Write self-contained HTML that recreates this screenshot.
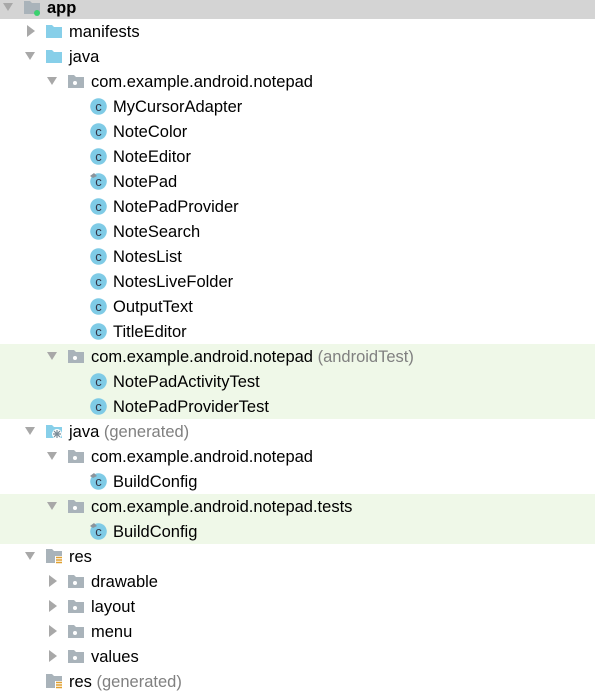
<!DOCTYPE html>
<html><head><meta charset="utf-8"><style>
body{margin:0;width:595px;height:697px;background:#fff;overflow:hidden;position:relative;font-family:"Liberation Sans","DejaVu Sans",sans-serif;font-size:16.5px;color:#000}
.band{position:absolute;left:0;width:595px}
.row{position:absolute;left:0;height:25px;width:595px}
.t{position:absolute;top:4px;white-space:nowrap;line-height:18px}
.g{color:#808080}
.arr{position:absolute}
.ic{position:absolute}
</style></head><body>
<div class="band" style="top:0;height:19px;background:#d4d4d4"></div>
<div class="band" style="top:344px;height:75px;background:#eff8e8"></div>
<div class="band" style="top:494px;height:50px;background:#eff8e8"></div>
<div id="tree"></div>
<script>
const rows=[
[0,'app',1,'mod',0,''],
[1,'manifests',2,'fold',0,''],
[1,'java',1,'fold',0,''],
[2,'com.example.android.notepad',1,'pkg',0,''],
[3,'MyCursorAdapter',0,'c',0,''],
[3,'NoteColor',0,'c',0,''],
[3,'NoteEditor',0,'c',0,''],
[3,'NotePad',0,'cr',0,''],
[3,'NotePadProvider',0,'c',0,''],
[3,'NoteSearch',0,'c',0,''],
[3,'NotesList',0,'c',0,''],
[3,'NotesLiveFolder',0,'c',0,''],
[3,'OutputText',0,'c',0,''],
[3,'TitleEditor',0,'c',0,''],
[2,'com.example.android.notepad',1,'pkg',0,' (androidTest)'],
[3,'NotePadActivityTest',0,'c',0,''],
[3,'NotePadProviderTest',0,'c',0,''],
[1,'java',1,'gen',0,' (generated)'],
[2,'com.example.android.notepad',1,'pkg',0,''],
[3,'BuildConfig',0,'cr',0,''],
[2,'com.example.android.notepad.tests',1,'pkg',0,''],
[3,'BuildConfig',0,'cr',0,''],
[1,'res',1,'res',0,''],
[2,'drawable',2,'pkg',0,''],
[2,'layout',2,'pkg',0,''],
[2,'menu',2,'pkg',0,''],
[2,'values',2,'pkg',0,''],
[1,'res',0,'res',0,' (generated)']
];
let h='';
rows.forEach((r,i)=>{
 const [lv,name,ar,ic,_,suf]=r;
 const top=(i==0?-5:19+25*(i-1));
 const ax=3+22*lv, ix=24+22*lv, tx=47+22*lv;
 let s='<div class="row" style="top:'+top+'px">';
 if(ar==1) s+='<svg class="arr" style="left:'+(ax)+'px;top:7px" width="11" height="10"><polygon points="0,1 10,1 5,9" fill="#a8a8a8"/></svg>';
 if(ar==2) s+='<svg class="arr" style="left:'+(ax+1)+'px;top:6px" width="10" height="12"><polygon points="1,0 9,6 1,12" fill="#a8a8a8"/></svg>';
 let svg='';
 if(ic=='mod') svg='<path d="M0 2h6l2 2h8v11H0z" fill="#a9b3ba"/><circle cx="13" cy="14" r="3" fill="#3bd16f"/>';
 if(ic=='fold') svg='<path d="M0 2h6l2 2h8v11H0z" fill="#87cfe9"/>';
 if(ic=='gen') svg='<path d="M0 2h6l2 2h8v11H0z" fill="#87cfe9"/><circle cx="11" cy="11" r="5" fill="#fff"/><path d="M11 7v8M7 11h8M8 8l6 6M14 8l-6 6" stroke="#7a8a96" stroke-width="1.2"/>';
 if(ic=='pkg') svg='<path d="M0 2h6l2 2h8v11H0z" fill="#a9b3ba"/><circle cx="7" cy="10" r="2" fill="#fff"/>';
 if(ic=='res') svg='<path d="M0 1h6l2 2h8v12H0z" fill="#a9b3ba"/><rect x="9" y="8" width="7" height="8" fill="#fff"/><path d="M10 9.5h6M10 12h6M10 14.5h6" stroke="#e0a030" stroke-width="1.4"/>';
 if(ic=='c'||ic=='cr') svg='<circle cx="8.5" cy="8.5" r="8.3" fill="#7fcbe6"/><text x="8.5" y="13" font-size="13" text-anchor="middle" fill="#334" font-family="Liberation Sans">c</text>'+(ic=='cr'?'<path d="M0 3l4-3 3 3-4 2z" fill="#8a949c"/>':'');
 const itop=(ic=='c'||ic=='cr')?4:4;
 s+='<svg class="ic" style="left:'+ix+'px;top:'+itop+'px" width="18" height="18">'+svg+'</svg>';
 s+='<div class="t" style="left:'+tx+'px;'+(i==0?'font-weight:bold;':'')+'">'+name+(suf?'<span class="g">'+suf+'</span>':'')+'</div></div>';
 h+=s;
});
document.getElementById('tree').innerHTML=h;
</script>
</body></html>
